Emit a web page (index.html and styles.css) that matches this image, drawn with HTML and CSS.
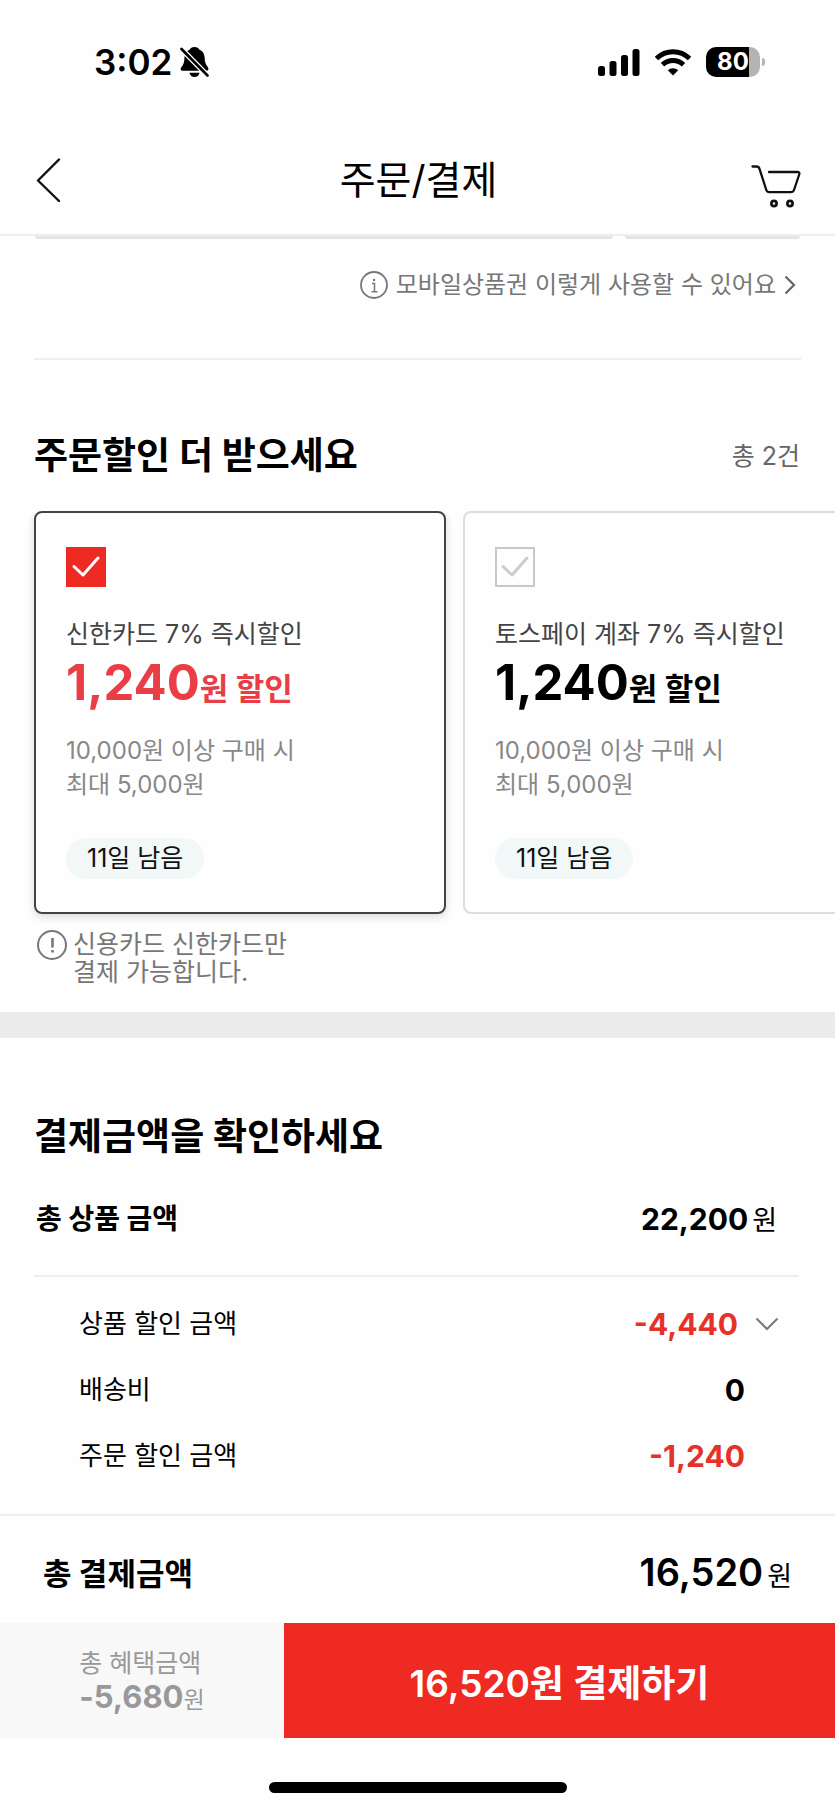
FILE: index.html
```html
<!DOCTYPE html>
<html lang="ko">
<head>
<meta charset="utf-8">
<meta name="viewport" content="width=device-width, initial-scale=1">
<title>주문/결제</title>
<link rel="stylesheet" href="styles.css">
</head>
<body>
<div class="status">
  <div class="status-side">
    <span class="clock">3:02</span>
    <svg class="bell" width="29" height="32" viewBox="0 0 29 32" aria-hidden="true">
      <path d="M14.500 1c2.500 0 4.200 1.300 4.700 2.500 3.800 1.500 5.300 4.800 5.400 8.100.1 4.500 1 6.900 3.300 9.600.9 1.200.6 3.500-.9 3.500H2c-1.700 0-1.600-2.200-.7-3.400 2.400-2.800 3-5.200 3.200-9.700.1-3.300 1.600-6.600 5.300-8.100C10.300 2.300 12 1 14.500 1z"/>
      <path d="M9.500 26.700h10c-.5 2.700-2.400 4.300-5 4.300s-4.500-1.600-5-4.300z"/>
      <path d="M0 1.500L30 32" stroke="#fefefe" stroke-width="5.400"/>
      <path d="M1.500 3L27.500 29.500" stroke="#000" stroke-width="2.600" stroke-linecap="round"/>
    </svg>
  </div>
  <div class="status-side status-right">
    <svg width="42" height="27" viewBox="0 0 42 27" aria-hidden="true">
      <rect x="0" y="17" width="7" height="10" rx="2.500"/><rect x="11.500" y="12" width="7" height="15" rx="2.500"/><rect x="23" y="6" width="7" height="21" rx="2.500"/><rect x="34.500" y="0" width="7" height="27" rx="2.500"/>
    </svg>
    <svg class="wifi" width="36" height="27" viewBox="0 0 36 27" fill="none" stroke="#000" stroke-width="4.800" aria-hidden="true">
      <path d="M1.500 9.500a23.500 23.500 0 0 1 33 0"/><path d="M7.500 15.800a15 15 0 0 1 21 0"/><path d="M18 26.500l-5.200-5.200a7.500 7.500 0 0 1 10.400 0z" fill="#000" stroke="none"/>
    </svg>
    <div class="battery"><span class="battery-level">80</span><span class="battery-tip"></span></div>
  </div>
</div>
<header class="nav">
  <button class="icon-button" type="button" aria-label="뒤로">
    <svg width="26" height="44" viewBox="0 0 26 44" fill="none" stroke="#111" stroke-width="2.400" stroke-linecap="round" stroke-linejoin="round"><path d="M23 1.500L2 22.500 23 43"/></svg>
  </button>
  <h1 class="nav-title">주문/결제</h1>
  <button class="icon-button cart" type="button" aria-label="장바구니">
    <svg width="50" height="44" viewBox="0 0 50 44" fill="none" stroke="#111" stroke-width="2.300" stroke-linecap="round" stroke-linejoin="round"><path d="M1.500 1.500h4c1.500 0 2.500.7 3 2.300L15.300 25c.5 1.500 1.500 2.200 3 2.200h21.500c1.700 0 2.700-.7 3.200-2.200l5.200-15.500c.6-1.700-.3-2.500-1.900-2.500H18"/><circle cx="23" cy="38.500" r="2.600" stroke-width="2.700"/><circle cx="39" cy="38.500" r="2.600" stroke-width="2.700"/></svg>
  </button>
</header>
<main>
  <div class="fields"><span class="field-main"></span><span class="field-side"></span></div>
  <section class="guide">
    <a class="guide-link" href="#">
      <svg width="28" height="28" viewBox="0 0 28 28" fill="none" stroke="#777" stroke-width="1.800"><circle cx="14" cy="14" r="13"/><path d="M12 12.500h2.500v8M11.500 20.800h6" stroke-width="1.500"/><circle cx="14" cy="9" r="1.200" fill="#777" stroke="none"/></svg>
      <span>모바일상품권 이렇게 사용할 수 있어요</span>
      <svg class="guide-arrow" width="12" height="20" viewBox="0 0 12 20" fill="none" stroke="#666" stroke-width="2.200"><path d="M1.500 1.500l8.500 8.500-8.500 8.500"/></svg>
    </a>
  </section>
  <section class="offers">
    <div class="offers-head">
      <h2 class="heading">주문할인 더 받으세요</h2>
      <span class="count">총 2건</span>
    </div>
    <div class="cards">
      <label class="card card-selected">
        <span class="check"><input class="check-input" type="checkbox" checked><svg class="check-mark" width="28" height="22" viewBox="0 0 28 22"><path d="M2 10.500l9 8.500L26 2"/></svg></span>
        <span class="card-title">신한카드 7% 즉시할인</span>
        <strong class="card-price">1,240<span class="card-unit">원 할인</span></strong>
        <span class="card-terms">10,000원 이상 구매 시<br>최대 5,000원</span>
        <span class="badge">11일 남음</span>
      </label>
      <label class="card">
        <span class="check"><input class="check-input" type="checkbox"><svg class="check-mark" width="28" height="22" viewBox="0 0 28 22"><path d="M2 10.500l9 8.500L26 2"/></svg></span>
        <span class="card-title">토스페이 계좌 7% 즉시할인</span>
        <strong class="card-price">1,240<span class="card-unit">원 할인</span></strong>
        <span class="card-terms">10,000원 이상 구매 시<br>최대 5,000원</span>
        <span class="badge">11일 남음</span>
      </label>
    </div>
    <div class="notice">
      <svg width="30" height="30" viewBox="0 0 30 30" fill="none" stroke="#777" stroke-width="2"><circle cx="15" cy="15" r="14"/><path d="M15.500 8v9.500M15.500 20v2.500" stroke-width="2.600"/></svg>
      <p class="notice-text">신용카드 신한카드만<br>결제 가능합니다.</p>
    </div>
  </section>
  <section class="summary">
    <h2 class="heading">결제금액을 확인하세요</h2>
    <div class="row row-main">
      <span class="row-label">총 상품 금액</span>
      <span class="amount">22,200<span class="won">원</span></span>
    </div>
    <div class="row row-sub">
      <span>상품 할인 금액</span>
      <span class="amount amount-minus amount-more">-4,440<button class="icon-button" type="button" aria-label="상세 보기"><svg width="24" height="14" viewBox="0 0 24 14" fill="none" stroke="#777" stroke-width="2"><path d="M1.500 1.500L12 12 22.500 1.500"/></svg></button></span>
    </div>
    <div class="row row-sub"><span>배송비</span><span class="amount">0</span></div>
    <div class="row row-sub"><span>주문 할인 금액</span><span class="amount amount-minus">-1,240</span></div>
  </section>
</main>
<footer>
  <div class="row total">
    <span class="total-label">총 결제금액</span>
    <span class="total-amount">16,520<span class="won">원</span></span>
  </div>
  <div class="pay">
    <div class="benefit">
      <div class="benefit-box"><div>총 혜택금액</div><div class="benefit-amount">-5,680<span class="benefit-won">원</span></div></div>
    </div>
    <button class="pay-button" type="button">16,520원 결제하기</button>
  </div>
  <div class="home"><div class="home-bar"></div></div>
</footer>
</body>
</html>
```
FILE: styles.css
```css
* { box-sizing: border-box; }
body {
  margin: 0;
  background: #fefefe;
  color: #000;
  font-family: Inter, "Noto Sans CJK KR", sans-serif;
  font-size: 25px;
  line-height: 34px;
}
h1, h2, p { margin: 0; }
svg { display: block; flex: none; }
.icon-button { padding: 0; border: 0; background: none; cursor: pointer; }

.status { display: flex; justify-content: space-between; padding: 42px 70px 0 94px; height: 124px; }
.status-side { display: flex; align-items: center; height: 40px; gap: 8px; }
.clock { font-size: 35px; font-weight: 600; }
.status-right { gap: 15px; }
.battery { display: flex; align-items: center; gap: 2px; }
.battery-level {
  width: 54px; height: 30px; border-radius: 10px;
  background: linear-gradient(to right, #000 80%, #b4b4b4 80%);
  color: #fff; font-size: 24px; line-height: 30px; font-weight: 700; text-align: center;
}
.battery-tip { width: 3px; height: 8px; border-radius: 0 4px 4px 0; background: #b4b4b4; }

.nav {
  display: grid; grid-template-columns: 1fr auto 1fr; align-items: center;
  height: 112px; padding: 2px 34px 0 36px; border-bottom: 2px solid #eee;
}
.nav-title { font-size: 39px; line-height: 48px; font-weight: 400; }
.cart { justify-self: end; padding-top: 14px; }

.fields { display: flex; gap: 12px; padding: 0 35px; height: 3px; }
.fields span { background: #e4e4e4; border-radius: 0 0 6px 6px; }
.field-main { flex: 578; }
.field-side { flex: 175; }

.guide { display: flex; justify-content: flex-end; margin: 0 34px; padding: 29px 5px 56px; border-bottom: 2px solid #eee; }
.guide-link { display: flex; align-items: center; gap: 8px; color: #777; font-size: 24px; text-decoration: none; }

.offers { border-bottom: 26px solid #ebebeb; padding-bottom: 26px; }
.offers-head { display: flex; justify-content: space-between; align-items: center; padding: 72px 35px 31px 34px; }
.heading { font-size: 37px; line-height: 48px; font-weight: 700; }
.count { color: #666; }
.cards { display: flex; gap: 17px; padding: 0 0 16px 34px; overflow-x: auto; scrollbar-width: none; }
.card {
  display: flex; flex-direction: column; align-items: flex-start; flex: 0 0 412px;
  padding: 34px 30px 33px; border: 2px solid #ddd; border-radius: 8px;
}
.card-selected { border-color: #444; box-shadow: 0 3px 8px rgba(0, 0, 0, .14); }
.check { display: grid; place-items: center; margin-bottom: 30px; }
.check-input { grid-area: 1 / 1; appearance: none; width: 40px; height: 40px; margin: 0; border: 2px solid #c8c8c8; }
.check-input:checked { background: #ef2a23; border-color: #ef2a23; }
.check-mark { grid-area: 1 / 1; fill: none; stroke: #ccc; stroke-width: 3; stroke-linecap: round; stroke-linejoin: round; pointer-events: none; }
.check-input:checked + .check-mark { stroke: #fff; }
.card-title { color: #444; white-space: nowrap; }
.card-price { margin: 4px 0 23px; font-size: 49px; line-height: 56px; font-weight: 700; white-space: nowrap; }
.card-selected .card-price { color: #e93e46; }
.card-unit { font-size: 31px; line-height: 30px; }
.card-terms { color: #888; font-size: 24px; }
.badge {
  margin-top: 36px; padding: 0 21px; border-radius: 21px; background: #f2f7f8;
  color: #111; font-size: 25px; line-height: 41px;
}
.notice { display: flex; gap: 6px; padding-left: 37px; color: #777; }
.notice-text { line-height: 28px; }

.summary { padding: 75px 36px 25px 34px; }
.row { display: flex; justify-content: space-between; align-items: center; }
.row-main { padding: 41px 22px 39px 2px; margin-bottom: 14px; border-bottom: 2px solid #eee; }
.row-label { font-size: 28px; font-weight: 700; }
.amount { font-size: 30px; font-weight: 700; }
.won { margin-left: 4px; font-size: 27px; line-height: 30px; font-weight: 400; }
.row-sub { min-height: 66px; padding: 0 54px 0 45px; font-size: 26px; }
.amount-minus { color: #e63129; }
.amount-more { display: flex; align-items: center; gap: 17px; margin-right: -34px; }

.total { padding: 39px 43px 31px; border-top: 2px solid #eee; }
.total-label { font-size: 31px; font-weight: 700; }
.total-amount { font-size: 38px; font-weight: 600; }
.pay { display: flex; height: 115px; }
.benefit { flex: 34 1 0; display: flex; justify-content: center; align-items: center; background: #f8f8f8; color: #999; }
.benefit-amount { font-size: 31px; font-weight: 700; }
.benefit-won { font-size: 23px; font-weight: 400; line-height: 30px; }
.pay-button {
  flex: 66 1 0; padding: 0; border: 0; background: #ef2a23; color: #fff;
  font-family: inherit; font-size: 37px; font-weight: 600; cursor: pointer;
}
.home { display: flex; justify-content: center; padding: 44px 0 17px; }
.home-bar { width: 298px; height: 11px; border-radius: 6px; background: #000; }
```
